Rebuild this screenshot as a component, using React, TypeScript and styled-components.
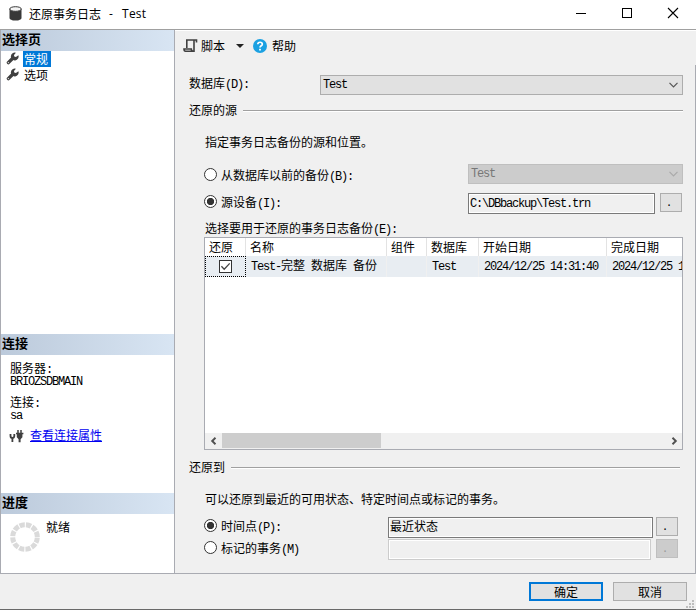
import React from "react";
import styled, { createGlobalStyle } from "styled-components";

const cjk = `"Noto Sans CJK SC", "Liberation Sans", sans-serif`;
const mono = `"Liberation Mono", "Noto Sans CJK SC", monospace`;

const GlobalStyle = createGlobalStyle`
  * { box-sizing: border-box; }
  html, body { margin: 0; background: #fff; overflow: hidden; }
  body { font: 12px/16px ${cjk}; color: #000; }
`;

/* Latin runs sit on a 6px grid, half the width of a Chinese character. */
const Latin = styled.span`
  font-family: ${mono};
  font-size: 12px;
  letter-spacing: -1.2px;
  line-height: 1;
  vertical-align: 0.5px;
`;

const Mixed = ({ children }: { children: string }) => (
  <>
    {children.split(/([\x20-\x7e]+)/).map((run, i) =>
      i % 2 ? <Latin key={i}>{run}</Latin> : run
    )}
  </>
);

const Window = styled.div`
  width: 696px;
  height: 611px;
  display: flex;
  flex-direction: column;
  background: #fff;
  white-space: pre;
`;

const TitleBar = styled.header`
  height: 30px;
  flex: none;
  display: flex;
  align-items: center;
  padding: 0 17px 3px 9px;
  border-bottom: 1px solid #a0a0a0;
`;

const Title = styled.div`
  flex: 1;
  display: flex;
  margin: 1px 0 0 7px;
`;

const TitleLatin = styled.span<{ $gap: number }>`
  margin-left: ${(p) => p.$gap}px;
  font-family: "Open Sans", sans-serif;
  letter-spacing: 0.2px;
`;

const WindowControls = styled.div`
  display: flex;
  gap: 34px;
  svg { display: block; }
`;

const Body = styled.main`
  height: 544px;
  flex: none;
  display: flex;
  background: #f0f0f0;
  border-bottom: 1px solid #a9abb2;
`;

const Sidebar = styled.aside`
  width: 175px;
  flex: none;
  display: flex;
  flex-direction: column;
  background: #fff;
  border: solid #a9abb2;
  border-width: 0 1px;
`;

const SideSection = styled.section<{ $height: number }>`
  height: ${(p) => p.$height}px;
  flex: none;
`;

const SideHeading = styled.h2`
  height: 21px;
  margin: 0;
  padding-left: 1px;
  font-size: 13px;
  font-weight: 700;
  line-height: 18px;
  background: linear-gradient(90deg, #bccadb, #d8e5f3);
`;

const PageItem = styled.div`
  height: 16px;
  display: flex;
  align-items: center;
  padding-left: 5px;
  gap: 5px;
  svg { margin-top: -2px; }
`;

const PageName = styled.span<{ $selected?: boolean }>`
  width: 28px;
  height: 16px;
  padding: 0 0 0 1px;
  margin-left: -1px;
  line-height: 16px;
  color: ${(p) => (p.$selected ? "#fff" : "#000")};
  background: ${(p) => (p.$selected ? "#0078d7" : "transparent")};
`;

const ConnectionInfo = styled.div`
  padding: 5px 0 0 9px;
`;

const InfoLine = styled.div<{ $height: number }>`
  height: ${(p) => p.$height}px;
  line-height: 16px;
`;

const LinkRow = styled.div`
  display: flex;
  align-items: center;
  gap: 6px;
  margin-left: -1px;
  svg { margin-top: 3px; }
`;

const Link = styled.a`
  color: #0000f0;
  text-decoration: underline;
  text-underline-offset: 1px;
`;

const Progress = styled.div`
  display: flex;
  padding: 5px 0 0 8px;
  gap: 5px;
  svg { margin-top: 2px; }
`;

const Content = styled.div`
  flex: 1;
  min-width: 0;
  display: flex;
  border-top: 1px solid #fff;
`;

const Page = styled.div`
  flex: 1;
  min-width: 0;
  display: flex;
  flex-direction: column;
  padding-left: 14px;
`;

const RightEdge = styled.div`
  width: 1px;
  margin-top: 34px;
  background: #a9abb2;
`;

const Toolbar = styled.div`
  height: 30px;
  flex: none;
  display: flex;
  align-items: center;
  margin-left: -6px;
`;

const ToolText = styled.span<{ $before: number; $after: number }>`
  margin: 0 ${(p) => p.$after}px 0 ${(p) => p.$before}px;
`;

const Row = styled.div<{ $top: number; $height?: number; $indent?: number }>`
  height: ${(p) => p.$height ?? 16}px;
  flex: none;
  display: flex;
  align-items: flex-start;
  margin: ${(p) => p.$top}px 12px 0 ${(p) => p.$indent ?? 0}px;
`;

const Label = styled.label<{ $width?: number }>`
  width: ${(p) => (p.$width ? `${p.$width}px` : "auto")};
  flex: none;
`;

const Rule = styled.div<{ $right?: number }>`
  flex: 1;
  height: 2px;
  margin: 8px ${(p) => p.$right ?? 0}px 0 6px;
  background: linear-gradient(#a0a0a0 50%, #fff 50%);
`;

const Combo = styled.div<{ $width: number; $disabled?: boolean }>`
  width: ${(p) => p.$width}px;
  height: 20px;
  display: flex;
  align-items: center;
  justify-content: space-between;
  padding: 0 4px 0 2px;
  color: ${(p) => (p.$disabled ? "#777" : "#000")};
  background: ${(p) => (p.$disabled ? "#ccc" : "#e1e1e1")};
  border: 1px solid ${(p) => (p.$disabled ? "#bfbfbf" : "#adadad")};
`;

const TextBox = styled.div<{ $width: number; $disabled?: boolean }>`
  width: ${(p) => p.$width}px;
  height: 21px;
  padding: 0 0 0 1px;
  line-height: 16px;
  background: #f0f0f0;
  border: 1px solid ${(p) => (p.$disabled ? "#ccc" : "#7a7a7a")};
  box-shadow: inset 0 0 0 1px #fff;
`;

const BrowseButton = styled.button<{ $left: number }>`
  width: 22px;
  height: 19px;
  margin: 0 0 0 ${(p) => p.$left}px;
  padding: 0 4px 0 0;
  font: 11px/16px ${mono};
  color: #000;
  background: #e1e1e1;
  border: 1px solid #adadad;
  &:disabled {
    color: #999;
    background: #ccc;
    border-color: #bfbfbf;
  }
`;

const RadioLabel = styled.label<{ $width: number; $top: number }>`
  width: ${(p) => p.$width}px;
  flex: none;
  display: flex;
  align-items: center;
  gap: 4px;
  margin-top: ${(p) => p.$top}px;
`;

const RadioMark = styled.span<{ $on?: boolean }>`
  width: 13px;
  height: 13px;
  margin-top: -1px;
  border: 1px solid #333;
  border-radius: 50%;
  background: ${(p) => (p.$on ? "radial-gradient(circle, #333 3.3px, #fff 4px)" : "#fff")};
`;

const Grid = styled.div`
  width: 479px;
  height: 213px;
  flex: none;
  display: flex;
  flex-direction: column;
  margin: 1px 0 0 15px;
  background: #fff;
  border: 1px solid #a9abb2;
  overflow: hidden;
`;

const GridLine = styled.div<{ $data?: boolean }>`
  height: ${(p) => (p.$data ? 21 : 18)}px;
  flex: none;
  display: grid;
  grid-template-columns: 41px 141px 40px 52px 128px 128px;
  line-height: 18px;
  background: ${(p) => (p.$data ? "#e8edf2" : "#fff")};
`;

const Cell = styled.div<{ $data?: boolean }>`
  padding-left: ${(p) => (p.$data ? 5 : 4)}px;
  border-right: 1px solid ${(p) => (p.$data ? "#f0f0f0" : "#e3e3e3")};
  overflow: hidden;
`;

const CheckCell = styled.div`
  display: flex;
  align-items: center;
  justify-content: center;
  border: 1px dotted #000;
`;

const ScrollBar = styled.div`
  height: 15px;
  flex: none;
  display: flex;
  align-items: center;
  justify-content: space-between;
  margin: auto 0 1px;
  padding: 0 4px 0 5px;
  background: #f0f0f0;
  box-shadow: 0 1px #f0f0f0;
`;

const Thumb = styled.div`
  width: 159px;
  height: 15px;
  margin: 0 auto 0 5px;
  background: #cdcdcd;
`;

const Footer = styled.footer`
  height: 36px;
  flex: none;
  display: flex;
  justify-content: flex-end;
  gap: 10px;
  padding: 8px 2px 0 0;
  background: #f0f0f0;
  border-bottom: 1px solid #696969;
`;

const DialogButton = styled.button<{ $primary?: boolean }>`
  width: 74px;
  height: 19px;
  padding: 1px 0 0;
  font: 12px/14px ${cjk};
  color: #000;
  background: #e1e1e1;
  border: ${(p) => (p.$primary ? "2px solid #0078d7" : "1px solid #adadad")};
`;

const Grip = styled.svg`
  align-self: flex-end;
  margin: 0 0 1px -11px;
`;

const IconBox = styled.span`
  display: flex;
  margin: 0 5px 0 9px;
`;

const Chevron = ({ color = "#555" }: { color?: string }) => (
  <svg width="9" height="6" viewBox="0 0 9 6">
    <path d="M0.5 0.8 4.5 4.8 8.5 0.8" fill="none" stroke={color} strokeWidth="1.2" />
  </svg>
);

const ScrollArrow = ({ right }: { right?: boolean }) => (
  <svg width="7" height="8" viewBox="0 0 7 8">
    <path d={right ? "M1.5 .8 4.8 4 1.5 7.2" : "M5.5 .8 2.2 4 5.5 7.2"} fill="none" stroke="#505050" strokeWidth="1.9" />
  </svg>
);

const DatabaseIcon = () => (
  <svg width="13" height="15" viewBox="0 0 13 15">
    <path d="M.5 3v9c0 1.5 2.6 2.6 6 2.6s6-1.1 6-2.6V3z" fill="#383838" />
    <ellipse cx="6.5" cy="3" rx="5.8" ry="2.3" fill="#f4f4f4" stroke="#383838" />
  </svg>
);

const Wrench = () => (
  <svg width="13" height="13" viewBox="0 0 13 13">
    <path d="M2.4 10.6 7 6" stroke="#404040" strokeWidth="3.4" strokeLinecap="round" />
    <path d="M9.9.8A3.9 3.9 0 1 0 12.4 3.2L9.9 5 8.2 4.6 8 3z" fill="#404040" />
    <circle cx="2.4" cy="10.6" r=".7" fill="#ddd" />
  </svg>
);

const ScriptIcon = () => (
  <svg width="15" height="14" viewBox="0 0 15 14">
    <path d="M3.8 9V1h9.7v2.6M11 1.5v10.7H2.5c-1.3 0-1.5-1.4-1.5-2.2h7.3c0 1.2.7 2.2 2 2.2" fill="none" stroke="#404040" strokeWidth="1.6" />
  </svg>
);

const HelpIcon = () => (
  <svg width="14" height="14" viewBox="0 0 14 14">
    <circle cx="7" cy="7" r="7" fill="#1ba1e2" />
    <path d="M4.8 5.3C4.8 2.5 9.3 2.6 9.3 5.2 9.3 6.8 7 6.8 7 8.6" fill="none" stroke="#fff" strokeWidth="1.7" />
    <rect x="6.1" y="9.8" width="1.8" height="1.7" fill="#fff" />
  </svg>
);

const PlugIcon = () => (
  <svg width="15" height="14" viewBox="0 0 15 14">
    <path d="M1.5 5v2c0 2.6 3.8 2.6 3.8 0V5M3.4 8v5" fill="none" stroke="#404040" strokeWidth="1.8" />
    <path d="M9 1v4M12 1v4M7 4.5h7.4" stroke="#404040" strokeWidth="1.5" />
    <path d="M7.8 5h5.6v3.3l-1.8 2v3H9.6v-3l-1.8-2z" fill="#404040" />
  </svg>
);

const Spinner = () => (
  <svg width="32" height="32" viewBox="0 0 32 32">
    <circle cx="16" cy="16" r="12.3" fill="none" stroke="#dadada" strokeWidth="5"
      strokeDasharray="5.25 1.19" strokeDashoffset="-.6" />
  </svg>
);

const CheckBox = () => (
  <svg width="13" height="13" viewBox="0 0 13 13">
    <rect x=".5" y=".5" width="12" height="12" fill="#fff" stroke="#333" />
    <path d="M2.4 6.3 5.2 9.2 10.7 3.4" fill="none" stroke="#444" strokeWidth="1.3" />
  </svg>
);

const headings = ["还原", "名称", "组件", "数据库", "开始日期", "完成日期"];
const backup = ["Test-完整 数据库 备份", "", "Test", "2024/12/25 14:31:40", "2024/12/25 1"];

export default function App() {
  return (
    <Window>
      <GlobalStyle />
      <TitleBar>
        <DatabaseIcon />
        <Title>
          还原事务日志
          <TitleLatin $gap={8}>-</TitleLatin>
          <TitleLatin $gap={9}>Test</TitleLatin>
        </Title>
        <WindowControls>
          <svg width="12" height="12"><path d="M1 6.5h10" stroke="#000" /></svg>
          <svg width="12" height="12"><rect x="1.5" y="1.5" width="9" height="9" fill="none" stroke="#000" /></svg>
          <svg width="12" height="12"><path d="M1 1 11 11M11 1 1 11" stroke="#000" strokeWidth="1.1" /></svg>
        </WindowControls>
      </TitleBar>
      <Body>
        <Sidebar>
          <SideSection $height={304}>
            <SideHeading>选择页</SideHeading>
            <PageItem><Wrench /><PageName $selected>常规</PageName></PageItem>
            <PageItem><Wrench /><PageName>选项</PageName></PageItem>
          </SideSection>
          <SideSection $height={159}>
            <SideHeading>连接</SideHeading>
            <ConnectionInfo>
              <InfoLine $height={12}><Mixed>服务器:</Mixed></InfoLine>
              <InfoLine $height={22}><Mixed>BRIOZSDBMAIN</Mixed></InfoLine>
              <InfoLine $height={12}><Mixed>连接:</Mixed></InfoLine>
              <InfoLine $height={20}><Mixed>sa</Mixed></InfoLine>
              <LinkRow><PlugIcon /><Link>查看连接属性</Link></LinkRow>
            </ConnectionInfo>
          </SideSection>
          <SideSection $height={80}>
            <SideHeading>进度</SideHeading>
            <Progress><Spinner />就绪</Progress>
          </SideSection>
        </Sidebar>
        <Content>
          <Page>
            <Toolbar>
              <ScriptIcon />
              <ToolText $before={3} $after={11}>脚本</ToolText>
              <svg width="8" height="4"><path d="M0 0h8L4 4z" fill="#222" /></svg>
              <IconBox><HelpIcon /></IconBox>
              帮助
            </Toolbar>
            <Row $top={14} $height={20}>
              <Label $width={131}><Mixed>数据库(D):</Mixed></Label>
              <Combo $width={363}><Mixed>Test</Mixed><Chevron /></Combo>
            </Row>
            <Row $top={7}><Label>还原的源</Label><Rule /></Row>
            <Row $top={16} $indent={16}>指定事务日志备份的源和位置。</Row>
            <Row $top={14} $height={20} $indent={15}>
              <RadioLabel $width={264} $top={3}><RadioMark /><span><Mixed>从数据库以前的备份(B):</Mixed></span></RadioLabel>
              <Combo $width={215} $disabled><Mixed>Test</Mixed><Chevron color="#aaa" /></Combo>
            </Row>
            <Row $top={9} $height={21} $indent={15}>
              <RadioLabel $width={264} $top={1}><RadioMark $on /><span><Mixed>源设备(I):</Mixed></span></RadioLabel>
              <TextBox $width={187}><Mixed>C:\DBbackup\Test.trn</Mixed></TextBox>
              <BrowseButton $left={5}>.</BrowseButton>
            </Row>
            <Row $top={6} $indent={16}><Label><Mixed>选择要用于还原的事务日志备份(E):</Mixed></Label></Row>
            <Grid>
              <GridLine>{headings.map((h) => <Cell key={h}>{h}</Cell>)}</GridLine>
              <GridLine $data>
                <CheckCell><CheckBox /></CheckCell>
                {backup.map((v, i) => <Cell $data key={i}><Mixed>{v}</Mixed></Cell>)}
              </GridLine>
              <ScrollBar><ScrollArrow /><Thumb /><ScrollArrow right /></ScrollBar>
            </Grid>
            <Row $top={9}><Label>还原到</Label><Rule $right={3} /></Row>
            <Row $top={16} $indent={16}>可以还原到最近的可用状态、特定时间点或标记的事务。</Row>
            <Row $top={10} $height={21} $indent={15}>
              <RadioLabel $width={184} $top={1}><RadioMark $on /><span><Mixed>时间点(P):</Mixed></span></RadioLabel>
              <TextBox $width={265}>最近状态</TextBox>
              <BrowseButton $left={3}>.</BrowseButton>
            </Row>
            <Row $top={1} $height={21} $indent={15}>
              <RadioLabel $width={184} $top={1}><RadioMark /><span><Mixed>标记的事务(M)</Mixed></span></RadioLabel>
              <TextBox $width={263} $disabled />
              <BrowseButton $left={5} disabled>.</BrowseButton>
            </Row>
          </Page>
          <RightEdge />
        </Content>
      </Body>
      <Footer>
        <DialogButton $primary>确定</DialogButton>
        <DialogButton>取消</DialogButton>
        <Grip width="8" height="8">
          <path d="M6 0h2v2H6zM3 3h2v2H3zM6 3h2v2H6zM0 6h2v2H0zM3 6h2v2H3zM6 6h2v2H6z" fill="#bdbdbd" />
        </Grip>
      </Footer>
    </Window>
  );
}
